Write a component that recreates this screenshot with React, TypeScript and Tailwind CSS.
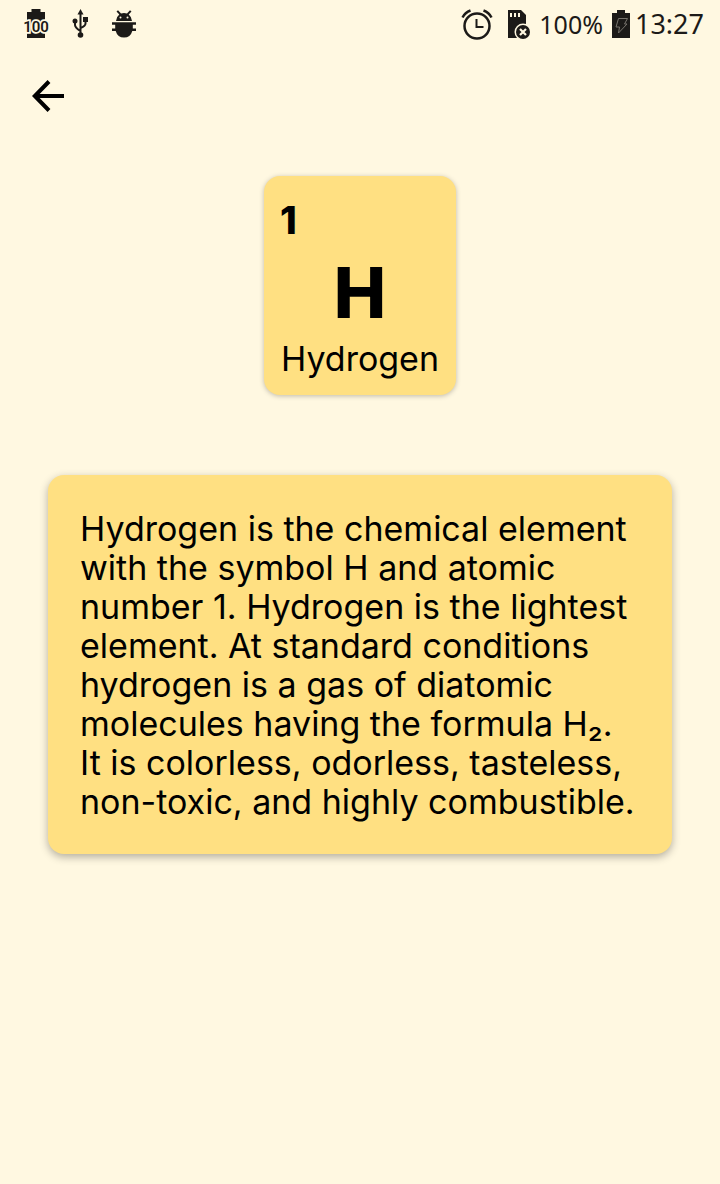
import type { ReactNode } from "react";

const element = {
  number: 1,
  symbol: "H",
  name: "Hydrogen",
  description:
    "Hydrogen is the chemical element with the symbol H and atomic number 1. Hydrogen is the lightest element. At standard conditions hydrogen is a gas of diatomic molecules having the formula H₂. It is colorless, odorless, tasteless, non-toxic, and highly combustible.",
};

function Icon({ label, className, viewBox, children }: { label: string; className: string; viewBox: string; children: ReactNode }) {
  return (
    <svg role="img" aria-label={label} className={className} viewBox={viewBox} fill="currentColor">
      {children}
    </svg>
  );
}

function BatteryLevelIcon() {
  return (
    <Icon label="Battery level 100" className="h-8 w-8" viewBox="0 0 32 32">
      <path d="M11.500 1h9v3h4.500v26H7V4h4.500z" />
      <text
        x="16"
        y="23.500"
        textAnchor="middle"
        fontSize="15"
        fontWeight="600"
        fontFamily="Roboto, sans-serif"
        stroke="#fff8e1"
        strokeWidth="3.500"
        paintOrder="stroke"
      >
        100
      </text>
    </Icon>
  );
}

function UsbIcon() {
  return (
    <Icon label="USB connected" className="h-8 w-6" viewBox="0 0 24 32">
      <path d="M12.500 1l3 5.500h-6z" />
      <circle cx="12.500" cy="27" r="2.800" />
      <circle cx="7" cy="13" r="2.500" />
      <path d="M15 9h5v5h-5z" />
      <path d="M12.500 5v21M7 13v4q0 2.500 5.300 6M17.500 13v2.500q0 2.500-5 4.500" fill="none" stroke="currentColor" strokeWidth="2" />
    </Icon>
  );
}

function DebugIcon() {
  return (
    <Icon label="USB debugging" className="h-8 w-6" viewBox="0 0 24 32">
      <path d="M4 13Q4.500 8.500 7.300 6.500L4.500 3.500l1.500-1.200L9 5.600Q12 4.500 15 5.600L18 2.300l1.500 1.200-2.800 3Q19.500 8.500 20 13z" />
      <path d="M0 14.300h24v2.400h-3.200v3.800H24v2.400h-3.700Q18.500 29.500 12 29.500T3.700 22.900H0v-2.400h3.200v-3.800H0z" />
      <circle cx="8.500" cy="9.500" r="1" fill="#fff8e1" />
      <circle cx="15.500" cy="9.500" r="1" fill="#fff8e1" />
    </Icon>
  );
}

function AlarmIcon() {
  return (
    <Icon label="Alarm set" className="h-8 w-8" viewBox="0 0 32 32">
      <g fill="none" stroke="currentColor" strokeWidth="2.500">
        <circle cx="16" cy="18" r="12.500" />
        <path d="M15.500 11v8h7" strokeWidth="2" />
        <path d="M1.500 9.500Q4 4.500 9.500 2.500M22.500 2.500Q28 4.500 30.500 9.500" />
      </g>
    </Icon>
  );
}

function MemoryCardIcon() {
  return (
    <Icon label="No memory card" className="h-8 w-6" viewBox="0 0 24 32">
      <path d="M1 2h13l5 5v23H1z" />
      <path d="M3 5h2v4H3zM7 5h2v4H7zM11 5h2v4h-2z" fill="#fff8e1" />
      <circle cx="16" cy="24" r="8.500" fill="#fff8e1" />
      <circle cx="16" cy="24" r="7" />
      <path d="M13 21l6 6M19 21l-6 6" stroke="#fff8e1" strokeWidth="2.200" />
    </Icon>
  );
}

function ChargingIcon() {
  return (
    <Icon label="Charging" className="h-8 w-5" viewBox="0 0 20 32">
      <path d="M6 2h8v3h5v25H1V5h5z" />
      <path d="M7.500 10.500h9l-3 5.500H16L7.500 25l1-6H5z" fill="none" stroke="#77736c" strokeWidth="1" />
    </Icon>
  );
}

function StatusBar() {
  return (
    <header className="flex h-12 items-center justify-between pr-4 pl-5 font-['Noto_Sans',sans-serif] text-[#1c1a18]">
      <div className="flex items-center gap-5">
        <span className="-mr-1 flex">
          <BatteryLevelIcon />
        </span>
        <UsbIcon />
        <DebugIcon />
      </div>
      <div className="flex items-center">
        <AlarmIcon />
        <span className="ml-[14px] flex">
          <MemoryCardIcon />
        </span>
        <span className="ml-2 text-[25px] leading-8">100%</span>
        <span className="mr-1 ml-2 flex">
          <ChargingIcon />
        </span>
        <time className="text-[27px] leading-8">13:27</time>
      </div>
    </header>
  );
}

export default function App() {
  return (
    <div className="min-h-screen bg-[#fff8e1] font-['Inter',sans-serif] text-black">
      <StatusBar />
      <nav className="flex h-24 items-center px-6">
        <button type="button" aria-label="Back" className="flex size-12 items-center justify-center">
          <svg className="size-12" viewBox="0 0 48 48" fill="none" stroke="currentColor" strokeWidth="4" aria-hidden="true">
            <path d="M40 24H12M25 9.500L10.800 24L25 38.500" />
          </svg>
        </button>
      </nav>
      <main className="flex flex-col items-center gap-20 px-12 pt-8 pb-12">
        <section className="flex w-48 flex-col rounded-2xl bg-[#ffe082] px-4 pt-5 pb-[19px] shadow-[0_1px_5px_rgba(0,0,0,0.25)]">
          <p className="text-[38px] leading-[48px] font-extrabold">{element.number}</p>
          <p className="text-center text-[70px] leading-[98px] font-extrabold">{element.symbol}</p>
          <h1 className="text-center text-[34px] leading-[34px] whitespace-nowrap">{element.name}</h1>
        </section>
        <section className="w-full rounded-2xl bg-[#ffe082] px-8 pt-[34px] pb-[33px] shadow-[0_3px_8px_rgba(0,0,0,0.3)]">
          <p className="text-[34px] leading-[39px]">{element.description}</p>
        </section>
      </main>
    </div>
  );
}
